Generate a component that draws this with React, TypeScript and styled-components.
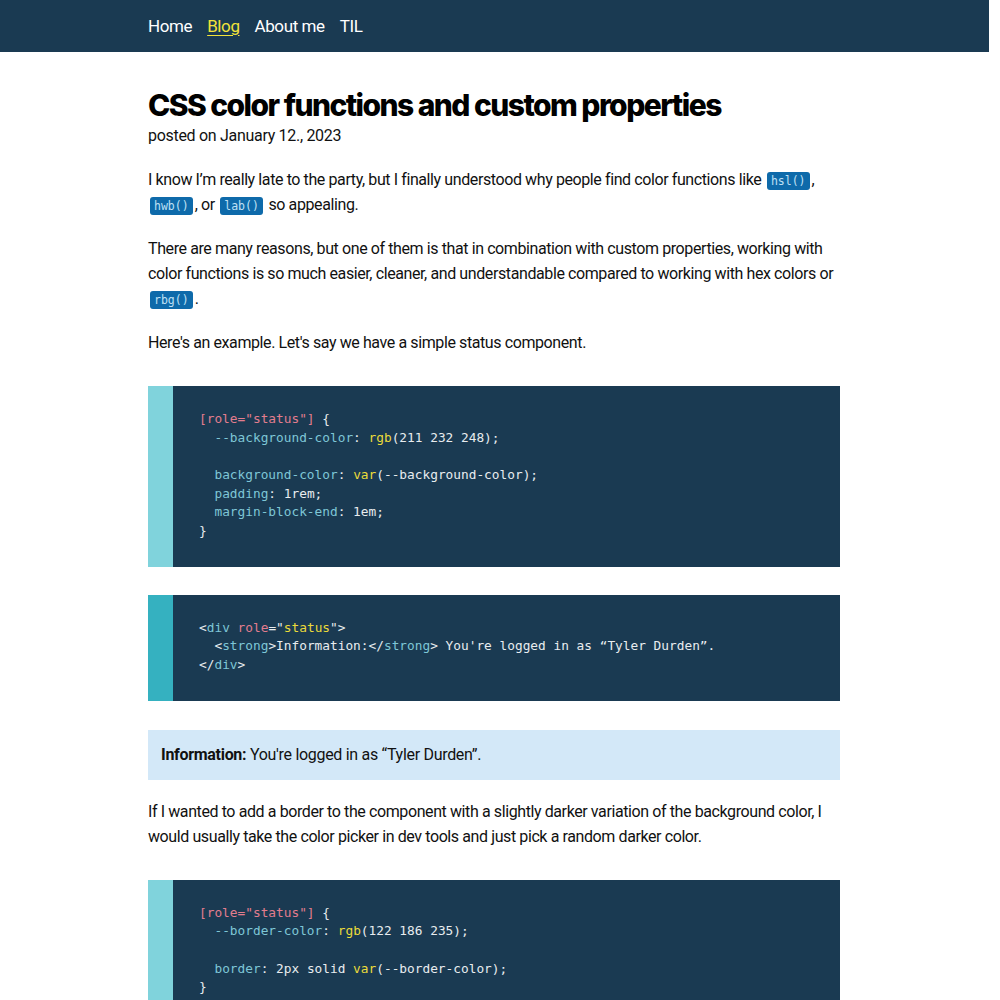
import React from "react";
import styled, { createGlobalStyle } from "styled-components";

const Global = createGlobalStyle`
  html, body { margin: 0; padding: 0; background: #ffffff; }
  body {
    font-family: Roboto, "Noto Sans", sans-serif;
    color: #111111;
    -webkit-font-smoothing: antialiased;
  }
`;

const Header = styled.header`
  background: #1a3a52;
  height: 52px;
  margin-right: 11px;
  display: flex;
  align-items: center;
`;

const Nav = styled.nav`
  width: 692px;
  margin-left: 148px;
  display: flex;
  gap: 15px;
`;

const NavLink = styled.a<{ $active?: boolean }>`
  font-size: 17px;
  letter-spacing: -0.4px;
  color: ${(p) => (p.$active ? "#f2e33a" : "#ffffff")};
  text-decoration: ${(p) => (p.$active ? "underline" : "none")};
  text-underline-offset: 3px;
`;

const Main = styled.main`
  width: 692px;
  padding: 35px 0 40px;
  margin-left: 148px;
`;

const Title = styled.h1`
  font-family: Inter, Roboto, sans-serif;
  font-size: 30px;
  font-weight: 800;
  letter-spacing: -1.55px;
  margin: 0;
  line-height: 36px;
  color: #000;
`;

const Meta = styled.p`
  margin: 1px 0 0;
  font-size: 16px;
  line-height: 24px;
  letter-spacing: -0.3px;
`;

const Para = styled.p`
  font-size: 16px;
  line-height: 25px;
  margin: 19px 0 0;
  letter-spacing: -0.4px;
`;

const InlineCode = styled.code`
  display: inline-block;
  font-family: "DejaVu Sans Mono", "Liberation Mono", monospace;
  font-size: 11.5px;
  line-height: 14px;
  letter-spacing: 0;
  background: #0e6aaa;
  color: #bfe0f5;
  padding: 2px 4px;
  border-radius: 3px;
  margin: 0 2px;
`;

const CodeBlock = styled.pre<{ $stripe: string }>`
  margin: 31px 0 0;
  background: #1a3a52;
  border-left: 25px solid ${(p) => p.$stripe};
  padding: 24px 26px 26px;
  font-family: "DejaVu Sans Mono", "Liberation Mono", monospace;
  font-size: 12.8px;
  line-height: 18.67px;
  color: #e8ecef;
  white-space: pre;
  overflow: hidden;
  & + & { margin-top: 28px; }
`;

const Sel = styled.span` color: #e27d8e; `;
const Prop = styled.span` color: #7ec6d6; `;
const Fn = styled.span` color: #eadb3a; `;
const Tag = styled.span` color: #7ec6d6; `;
const Attr = styled.span` color: #e27d8e; `;
const Str = styled.span` color: #eadb3a; `;

const Status = styled.div`
  margin-top: 29px;
  margin-bottom: 19px;
  background: rgb(211 232 248);
  padding: 13px 13px;
  font-size: 16px;
  line-height: 24px;
  letter-spacing: -0.3px;
  & + p { margin-top: 0; }
`;

export default function App() {
  return (
    <>
      <Global />
      <Header>
        <Nav>
          <NavLink>Home</NavLink>
          <NavLink $active>Blog</NavLink>
          <NavLink>About me</NavLink>
          <NavLink>TIL</NavLink>
        </Nav>
      </Header>
      <Main>
        <Title>CSS color functions and custom properties</Title>
        <Meta>posted on January 12., 2023</Meta>
        <Para>
          I know I’m really late to the party, but I finally understood why people find color functions like{" "}
          <InlineCode>hsl()</InlineCode>, <InlineCode>hwb()</InlineCode>, or <InlineCode>lab()</InlineCode> so appealing.
        </Para>
        <Para>
          There are many reasons, but one of them is that in combination with custom properties, working with color
          functions is so much easier, cleaner, and understandable compared to working with hex colors or{" "}
          <InlineCode>rbg()</InlineCode>.
        </Para>
        <Para>Here's an example. Let's say we have a simple status component.</Para>
        <CodeBlock $stripe="#80d3dc">
          <Sel>[role="status"]</Sel> {"{"}
          {"\n  "}<Prop>--background-color</Prop>: <Fn>rgb</Fn>(211 232 248);
          {"\n\n  "}<Prop>background-color</Prop>: <Fn>var</Fn>(--background-color);
          {"\n  "}<Prop>padding</Prop>: 1rem;
          {"\n  "}<Prop>margin-block-end</Prop>: 1em;
          {"\n}"}
        </CodeBlock>
        <CodeBlock $stripe="#35b1c0">
          &lt;<Tag>div</Tag> <Attr>role</Attr>="<Str>status</Str>"&gt;
          {"\n  "}&lt;<Tag>strong</Tag>&gt;Information:&lt;/<Tag>strong</Tag>&gt; You're logged in as “Tyler Durden”.
          {"\n"}&lt;/<Tag>div</Tag>&gt;
        </CodeBlock>
        <Status>
          <strong>Information:</strong> You're logged in as “Tyler Durden”.
        </Status>
        <Para>
          If I wanted to add a border to the component with a slightly darker variation of the background color, I
          would usually take the color picker in dev tools and just pick a random darker color.
        </Para>
        <CodeBlock $stripe="#80d3dc">
          <Sel>[role="status"]</Sel> {"{"}
          {"\n  "}<Prop>--border-color</Prop>: <Fn>rgb</Fn>(122 186 235);
          {"\n\n  "}<Prop>border</Prop>: 2px solid <Fn>var</Fn>(--border-color);
          {"\n}"}
        </CodeBlock>
      </Main>
    </>
  );
}
